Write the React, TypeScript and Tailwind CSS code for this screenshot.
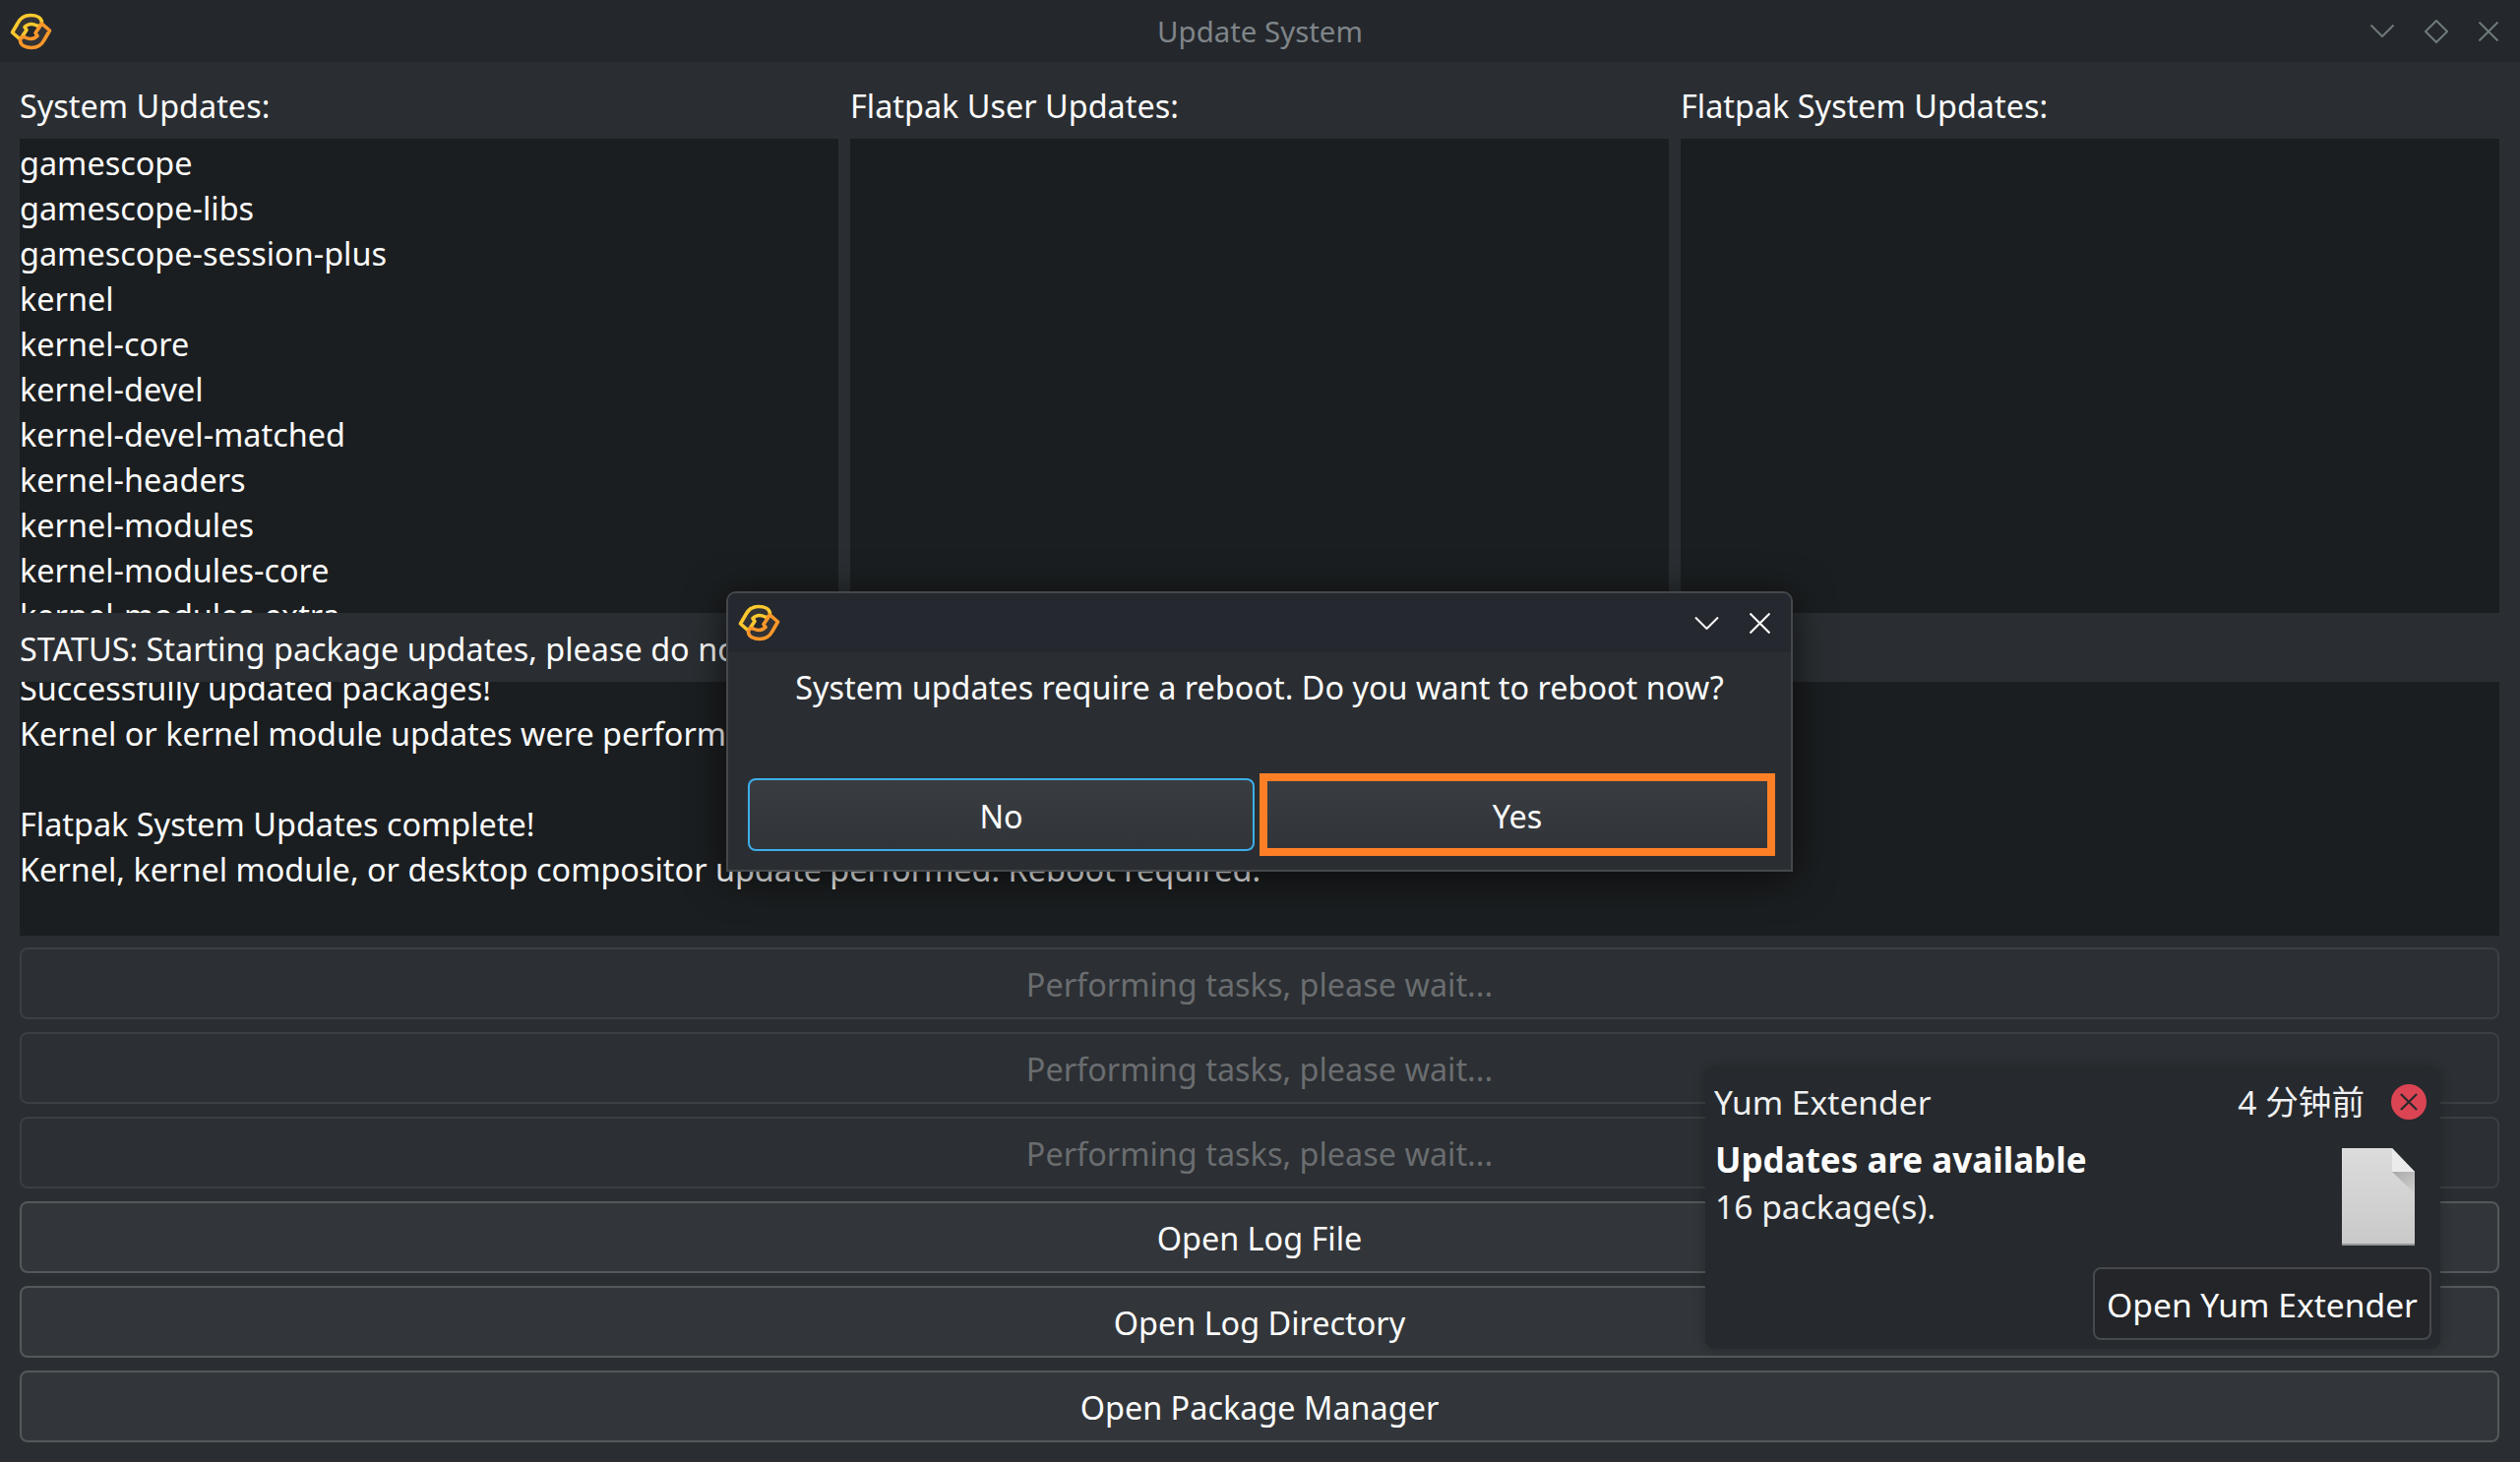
const pkgs = [
  'gamescope',
  'gamescope-libs',
  'gamescope-session-plus',
  'kernel',
  'kernel-core',
  'kernel-devel',
  'kernel-devel-matched',
  'kernel-headers',
  'kernel-modules',
  'kernel-modules-core',
  'kernel-modules-extra',
];

const arrow = 'M2.5 20 L8 10.5 C10.5 5.5 15.5 2.5 21 2.5 C27 2.5 32 5 32.5 9.5 C32.5 12.5 30 14 27.5 13 C23.5 11 18.5 11 15 14.5 L17 17.5 L10.5 27 Z';

function Logo({ className }: { className: string }) {
  return (
    <svg viewBox="0 0 44 38" className={className} strokeWidth="3.6" strokeLinejoin="round">
      <path d={arrow} stroke="#fdc92f" fill="#333336" />
      <path d={arrow} stroke="#fd972a" fill="#333336" transform="rotate(180 21.5 19)" />
    </svg>
  );
}

function Chevron({ className }: { className: string }) {
  return (
    <svg viewBox="0 0 24 13" className={className} fill="none" stroke="currentColor" strokeWidth="2">
      <path d="M0.5 0.5 L12 12 L23.5 0.5" />
    </svg>
  );
}

function Cross({ className }: { className: string }) {
  return (
    <svg viewBox="0 0 20 20" className={className} fill="none" stroke="currentColor" strokeWidth="2">
      <path d="M0.5 0.5 L19.5 19.5 M19.5 0.5 L0.5 19.5" />
    </svg>
  );
}

function ActionButton({ label, disabled }: { label: string; disabled?: boolean }) {
  return (
    <div
      className={
        disabled
          ? 'h-[73px] pt-[1px] rounded-[8px] border-2 border-[#3b3e42] bg-[#2c2f33] flex items-center justify-center text-[#6a6d70]'
          : 'h-[73px] pt-[1px] rounded-[8px] border-2 border-[#54585b] bg-[#32363a] flex items-center justify-center text-[#fcfcfc]'
      }
    >
      {label}
    </div>
  );
}

export default function App() {
  return (
    <div
      className="relative w-[2561px] h-[1486px] overflow-hidden bg-[#2a2e32] text-[#fcfcfc] text-[32.4px] leading-[46px]"
      style={{ fontFamily: '"Noto Sans", "Noto Sans CJK SC", sans-serif' }}
    >
      <div className="h-[63px] bg-[#24272c] flex items-center pl-[10px] pr-[22px]">
        <div className="w-[130px]">
          <Logo className="w-[44px] h-[38px]" />
        </div>
        <div className="flex-1 text-center text-[29.4px] text-[#7f8589] pl-[12px]">Update System</div>
        <div className="w-[130px] flex items-center justify-end gap-[31px] text-[#6f7a7a]">
          <Chevron className="w-[24px] h-[13px]" />
          <svg viewBox="0 0 24 24" className="w-[24px] h-[24px]" fill="none" stroke="currentColor" strokeWidth="2">
            <path d="M12 1 L23 12 L12 23 L1 12 Z" />
          </svg>
          <Cross className="w-[20px] h-[20px]" />
        </div>
      </div>

      <div className="pl-[20px] pr-[21px]">
        <div className="grid grid-cols-3 gap-x-[12px]">
          <div className="pt-[21px] pb-[11px]">System Updates:</div>
          <div className="pt-[21px] pb-[11px]">Flatpak User Updates:</div>
          <div className="pt-[21px] pb-[11px]">Flatpak System Updates:</div>
          <div className="h-[482px] bg-[#1b1e20] overflow-hidden pt-[1px]">
            {pkgs.map((p) => (
              <div key={p} className="h-[46px] flex items-center">
                {p}
              </div>
            ))}
          </div>
          <div className="h-[482px] bg-[#1b1e20]" />
          <div className="h-[482px] bg-[#1b1e20]" />
        </div>

        <div className="h-[70px] pt-[1px] flex items-center whitespace-nowrap">
          STATUS: Starting package updates, please do not close this window.
        </div>

        <div className="h-[258px] bg-[#1b1e20] overflow-hidden whitespace-nowrap">
          <div className="-mt-[17px]">
            <div>Successfully updated packages!</div>
            <div>Kernel or kernel module updates were performed. Reboot required.</div>
            <div className="h-[46px]" />
            <div>Flatpak System Updates complete!</div>
            <div>Kernel, kernel module, or desktop compositor update performed. Reboot required.</div>
          </div>
        </div>

        <div className="mt-[12px] flex flex-col gap-[13px]">
          <ActionButton label="Performing tasks, please wait..." disabled />
          <ActionButton label="Performing tasks, please wait..." disabled />
          <ActionButton label="Performing tasks, please wait..." disabled />
          <ActionButton label="Open Log File" />
          <ActionButton label="Open Log Directory" />
          <ActionButton label="Open Package Manager" />
        </div>
      </div>

      {/* reboot dialog */}
      <div className="absolute left-[738px] top-[601px] w-[1084px] h-[285px] rounded-t-[10px] border-2 border-[#46484c] bg-[#2a2e32] shadow-[0_6px_40px_rgba(0,0,0,0.65)] flex flex-col">
        <div className="h-[60px] bg-[#25282f] rounded-t-[8px] flex items-center pl-[10px] pr-[21px]">
          <Logo className="w-[44px] h-[38px]" />
          <div className="flex-1" />
          <div className="flex items-center gap-[31px] text-[#fcfcfc]">
            <Chevron className="w-[25px] h-[13px]" />
            <Cross className="w-[21px] h-[21px]" />
          </div>
        </div>
        <div className="text-center mt-[12px]">System updates require a reboot. Do you want to reboot now?</div>
        <div className="flex items-center mt-[65px] pl-[20px] pr-[16px]">
          <div className="w-[515px] h-[74px] pt-[1px] rounded-[8px] border-2 border-[#3daee9] bg-gradient-to-b from-[#393d41] to-[#31353a] flex items-center justify-center">
            No
          </div>
          <div className="ml-[5px] w-[524px] h-[84px] pt-[1px] border-[8px] border-[#ff7f27] bg-gradient-to-b from-[#393d41] to-[#31353a] flex items-center justify-center">
            Yes
          </div>
        </div>
      </div>

      {/* notification popup */}
      <div className="absolute left-[1733px] top-[1085px] w-[747px] h-[286px] rounded-[10px] bg-[#26292d] shadow-[0_0_12px_rgba(0,0,0,0.25)] flex flex-col pl-[9px] pr-[9px] text-[33.6px] text-[#eff0f1]">
        <div className="flex items-center h-[46px] mt-[12px]">
          <span className="flex-1">Yum Extender</span>
          <span className="mr-[27px]">4 分钟前</span>
          <div className="w-[36px] h-[36px] mr-[5px] rounded-full bg-[#da4453] flex items-center justify-center text-[#26292d]">
            <svg viewBox="0 0 20 20" className="w-[18px] h-[18px]" fill="none" stroke="currentColor" strokeWidth="2.4">
              <path d="M1 1 L19 19 M19 1 L1 19" />
            </svg>
          </div>
        </div>
        <div className="flex mt-[14px]">
          <div className="flex-1 pl-[1px] -mt-[1px]">
            <div className="font-bold text-[#fcfcfc] text-[35px] leading-[46px]">Updates are available</div>
            <div className="mt-[1px]">16 package(s).</div>
          </div>
          <svg viewBox="0 0 74 99" className="w-[74px] h-[99px] mt-[10px] mr-[17px]">
            <defs>
              <linearGradient id="page" x1="0" y1="0" x2="0" y2="1">
                <stop offset="0" stopColor="#dcdcdc" />
                <stop offset="1" stopColor="#c9c9c9" />
              </linearGradient>
              <linearGradient id="fold" x1="0" y1="0" x2="1" y2="1">
                <stop offset="0" stopColor="#a9a9a9" />
                <stop offset="1" stopColor="#d0d0d0" />
              </linearGradient>
            </defs>
            <path d="M0 0 H51 L74 24 V99 H0 Z" fill="url(#page)" />
            <path d="M0 97 H74 V99 H0 Z" fill="#949494" />
            <path d="M51 24 H74 V46 Z" fill="url(#fold)" />
            <path d="M51 0 L74 24 H51 Z" fill="#ebebeb" />
          </svg>
        </div>
        <div className="flex justify-end mt-[22px]">
          <div className="h-[74px] w-[344px] pt-[1px] rounded-[8px] border-2 border-[#46494d] bg-[#232529] flex items-center justify-center text-[#fcfcfc]">
            Open Yum Extender
          </div>
        </div>
      </div>
    </div>
  );
}
